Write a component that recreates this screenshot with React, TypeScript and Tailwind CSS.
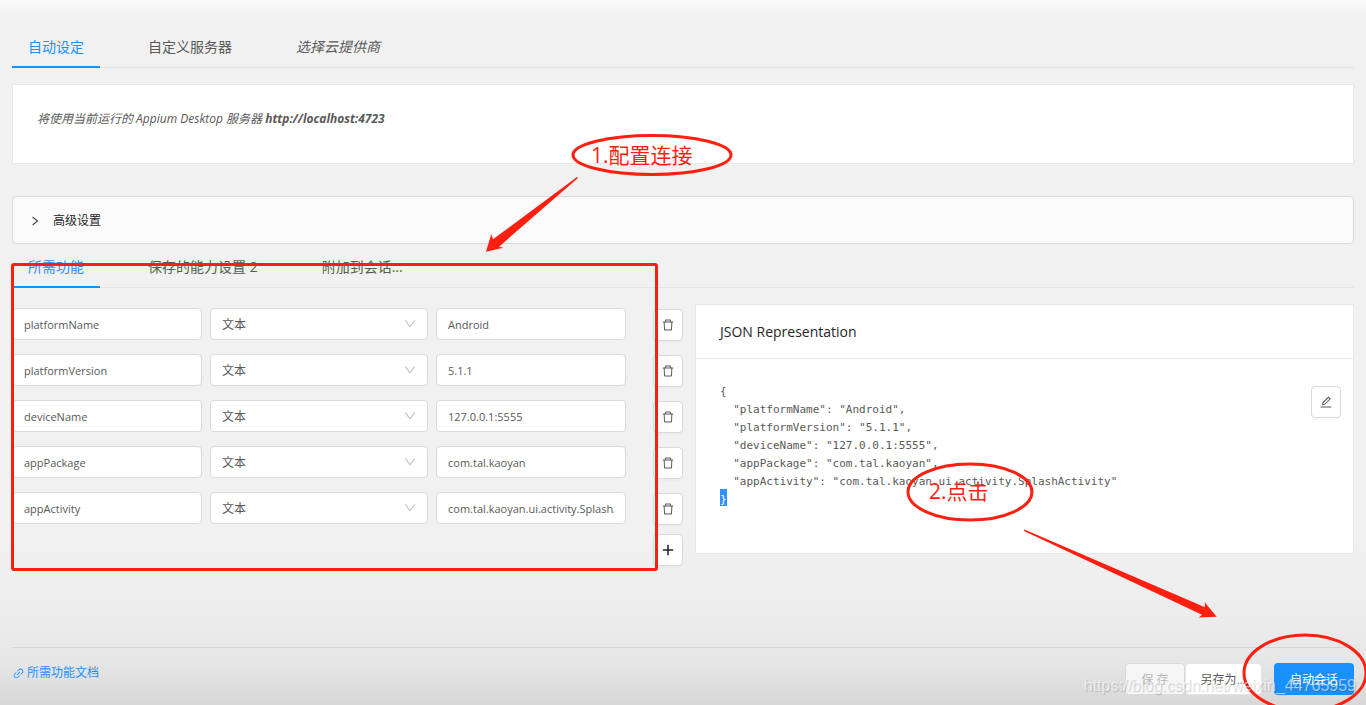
import { useState } from 'react';
import {
  AiOutlineDelete,
  AiOutlineDown,
  AiOutlineEdit,
  AiOutlineLink,
  AiOutlinePlus,
  AiOutlineRight,
} from 'react-icons/ai';

type Capability = { name: string; value: string };

const initialCaps: Capability[] = [
  { name: 'platformName', value: 'Android' },
  { name: 'platformVersion', value: '5.1.1' },
  { name: 'deviceName', value: '127.0.0.1:5555' },
  { name: 'appPackage', value: 'com.tal.kaoyan' },
  { name: 'appActivity', value: 'com.tal.kaoyan.ui.activity.SplashActivity' },
];

function TabBar({ tabs, italicLast = false }: { tabs: string[]; italicLast?: boolean }) {
  const [active, setActive] = useState(0);
  return (
    <div role="tablist" className="flex gap-8 border-b border-[#e4e4e4]">
      {tabs.map((tab, i) => (
        <button
          key={tab}
          role="tab"
          aria-selected={i === active}
          onClick={() => setActive(i)}
          className={
            '-mb-px h-[45px] whitespace-nowrap border-b-2 px-4 pt-1 text-[14px] leading-[21px] ' +
            (i === active ? 'border-[#1890ff] text-[#1890ff] ' : 'border-transparent text-[#595959] ') +
            (italicLast && i === tabs.length - 1 ? 'italic' : '')
          }
        >
          {tab}
        </button>
      ))}
    </div>
  );
}

const iconButton =
  'flex h-8 w-[30px] shrink-0 items-center justify-center rounded border border-[#d9d9d9] bg-white text-[#595959] shadow-[0_2px_0_rgba(0,0,0,0.015)]';

const field = 'h-8 w-full rounded border border-[#d9d9d9] bg-white px-[11px] text-[#595959] outline-none';

function CapabilityRow({ cap, onRemove }: { cap: Capability; onRemove: () => void }) {
  return (
    <div className="flex items-center">
      <div className="flex min-w-0 flex-1 gap-2">
        <div className="min-w-0 flex-[190]">
          <input aria-label="名称" className={field + ' text-[11px]'} defaultValue={cap.name} />
        </div>
        <div className="relative min-w-0 flex-[218]">
          <select aria-label={cap.name + ' 类型'} className={field + ' appearance-none pt-0.5'} defaultValue="text">
            <option value="text">文本</option>
          </select>
          <AiOutlineDown className="pointer-events-none absolute right-[11px] top-[9px] size-3.5 text-[#bfbfbf]" />
        </div>
        <div className="min-w-0 flex-[190]">
          <input aria-label={cap.name} className={field + ' text-[11px]'} defaultValue={cap.value} />
        </div>
      </div>
      <button aria-label={'删除 ' + cap.name} onClick={onRemove} className={iconButton + ' ml-[27px] translate-y-px'}>
        <AiOutlineDelete className="size-3.5" />
      </button>
    </div>
  );
}

export default function App() {
  const [caps, setCaps] = useState(initialCaps);
  const addCap = () => setCaps([...caps, { name: '', value: '' }]);

  return (
    <div className="relative flex min-h-screen flex-col overflow-hidden bg-[#f1f1f1] bg-[linear-gradient(180deg,#fafafa_0px,#f1f1f1_16px,#f1f1f1_75%,#ececec_88%,#e6e6e6_94%,#d7d7d7_100%)] px-3 font-['Open_Sans','Noto_Sans_CJK_SC',sans-serif] text-[12px] leading-[18px] text-[#595959]">
      <div className="pt-[23px]">
        <TabBar tabs={['自动设定', '自定义服务器', '选择云提供商']} italicLast />
      </div>

      <section className="mt-4 border border-[#e8e8e8] bg-white px-6 pb-[35px] pt-[25px]">
        <p className="italic">
          将使用当前运行的 Appium Desktop 服务器 <b className="font-bold">http://localhost:4723</b>
        </p>
      </section>

      <button className="mt-8 flex h-12 items-center gap-3 rounded border border-[#d9d9d9] bg-[#fafafa] px-4 pt-0.5 text-[#262626]">
        <AiOutlineRight className="size-3" />
        高级设置
      </button>

      <div className="relative -mt-px">
        <TabBar tabs={['所需功能', '保存的能力设置 2', '附加到会话...']} />

        <main className="mt-4 grid grid-cols-[671fr_659fr] items-start gap-3">
          <div className="flex flex-col pt-1">
            <div className="flex flex-col gap-3.5">
              {caps.map((cap, i) => (
                <CapabilityRow
                  key={cap.name + i}
                  cap={cap}
                  onRemove={() => setCaps(caps.filter((_, j) => j !== i))}
                />
              ))}
            </div>
            <button aria-label="添加" onClick={addCap} className={iconButton + ' mt-2.5 self-end'}>
              <AiOutlinePlus className="size-3.5 stroke-[40] text-[#262626]" />
            </button>
          </div>

          <section className="min-h-[250px] border border-[#e8e8e8] bg-white">
            <h2 className="border-b border-[#e8e8e8] px-6 py-4 text-[14px] font-medium leading-[21px] text-[#262626]">
              JSON Representation
            </h2>
            <div className="flex items-start justify-between pl-6 pr-3 pt-6">
              <pre className="font-['DejaVu_Sans_Mono',monospace] text-[11px] leading-[18px]">
                {'{\n'}
                {caps
                  .map((c) => '  "' + c.name + '": "' + c.value + '"')
                  .join(',\n')}
                {'\n'}
                <span className="bg-[#3390ff] pt-1 text-white">{'}'}</span>
              </pre>
              <button aria-label="编辑" className={iconButton + ' mt-[3px]'}>
                <AiOutlineEdit className="size-3.5" />
              </button>
            </div>
          </section>
        </main>

        <div className="pointer-events-none absolute -left-px top-5 h-[308px] w-[calc((100%-12px)*671/1330-24px)] rounded-[3px] border-[3px] border-[#ff1f10]" />
      </div>

      <footer className="relative mt-auto flex h-[58px] items-start justify-between border-t border-[#d4d4d4] pt-4">
        <a href="#docs" className="flex items-center gap-0.5 text-[#1890ff]">
          <AiOutlineLink className="size-[13px]" />
          所需功能文档
        </a>
        <div className="-mt-px flex">
          <button disabled className="h-8 rounded border border-[#d9d9d9] bg-[#f5f5f5] px-[15px] pt-0.5 text-[#b8b8b8]">
            保 存
          </button>
          <button className="h-8 rounded border border-[#e4e4e4] bg-white px-[15px] pt-0.5">另存为...</button>
          <button className="ml-3 h-8 rounded bg-[#1890ff] px-4 pt-0.5 text-white">启动会话</button>
        </div>
        <svg
          className="pointer-events-none absolute -right-3.5 -top-4"
          width="128"
          height="82"
          fill="none"
          stroke="#ff1f10"
          strokeWidth="3"
          aria-hidden="true"
        >
          <ellipse cx="65" cy="41" rx="61" ry="38" />
        </svg>
        <span className="pointer-events-none absolute -right-0.5 bottom-2 whitespace-nowrap font-['Liberation_Sans',sans-serif] text-[16px] leading-[22px] text-white/60 [text-shadow:1px_1px_1px_rgba(0,0,0,0.18)]">
          https://blog.csdn.net/weixin_44765959
        </span>
      </footer>

      <svg
        className="pointer-events-none absolute left-0 top-0"
        width="1366"
        height="640"
        fill="none"
        stroke="#ff1f10"
        strokeWidth="3"
        aria-hidden="true"
      >
        <ellipse cx="652" cy="155" rx="79" ry="19.5" />
        <ellipse cx="970" cy="492" rx="62" ry="28" />
        <path
          d="M486 251.7 491.3 234 493 239.3 577 177 578 178 499 246.7 503.3 247.7Z"
          fill="#ff1f10"
          stroke="none"
        />
        <path
          d="M1216.7 616.7 1204.7 602.3 1205 607.3 1024.5 529.5 1024 531 1202 614.7 1198.7 617.5Z"
          fill="#ff1f10"
          stroke="none"
        />
      </svg>
      <span className="pointer-events-none absolute left-[591px] top-[140px] text-[21px] leading-[30px] text-[#ff1f10]">
        1.配置连接
      </span>
      <span className="pointer-events-none absolute left-[929px] top-[476px] text-[21px] leading-[30px] text-[#ff1f10]">
        2.点击
      </span>
    </div>
  );
}
